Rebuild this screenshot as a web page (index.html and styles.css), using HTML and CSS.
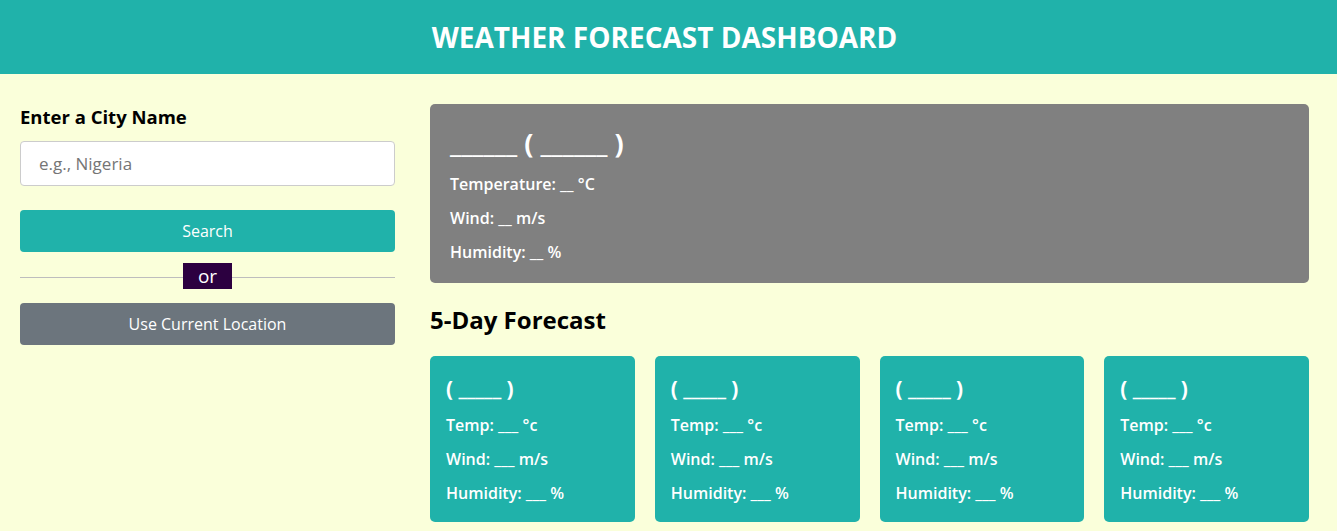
FILE: index.html
```html
<!DOCTYPE html>
<html lang="en">
<head>
<meta charset="utf-8">
<title>Weather Forecast Dashboard</title>
<link rel="stylesheet" href="styles.css">
</head>
<body>
<header class="header"><h1>WEATHER FORECAST DASHBOARD</h1></header>
<div class="container">
  <div class="weather-input">
    <h3>Enter a City Name</h3>
    <input class="city-input" type="text" placeholder="e.g., Nigeria">
    <button class="search-btn">Search</button>
    <div class="separator"><span>or</span></div>
    <button class="location-btn">Use Current Location</button>
  </div>
  <div class="weather-data">
    <div class="current-weather">
      <h2>______ ( ______ )</h2>
      <h6>Temperature: __ °C</h6>
      <h6>Wind: __ m/s</h6>
      <h6>Humidity: __ %</h6>
    </div>
    <div class="days-forecast">
      <h2>5-Day Forecast</h2>
      <ul class="weather-cards">
        <li class="card"><h3>( _____ )</h3><h6>Temp: ___ °c</h6><h6>Wind: ___ m/s</h6><h6>Humidity: ___ %</h6></li>
        <li class="card"><h3>( _____ )</h3><h6>Temp: ___ °c</h6><h6>Wind: ___ m/s</h6><h6>Humidity: ___ %</h6></li>
        <li class="card"><h3>( _____ )</h3><h6>Temp: ___ °c</h6><h6>Wind: ___ m/s</h6><h6>Humidity: ___ %</h6></li>
        <li class="card"><h3>( _____ )</h3><h6>Temp: ___ °c</h6><h6>Wind: ___ m/s</h6><h6>Humidity: ___ %</h6></li>
      </ul>
    </div>
  </div>
</div>
</body>
</html>
```
FILE: styles.css
```css
* { margin: 0; padding: 0; box-sizing: border-box; }
body {
  font-family: "Open Sans", sans-serif;
  background: #faffda;
  overflow: hidden;
}
.header {
  background: #20b2aa;
  text-align: center;
  padding: 18px 8px 18px 0;
}
.header h1 {
  color: #fff;
  font-size: 28px;
  font-weight: 700;
  line-height: 38px;
}
.container {
  display: flex;
  gap: 35px;
  padding: 30px 28px 0 20px;
}
.weather-input {
  width: 375px;
  flex-shrink: 0;
}
.weather-input h3 {
  font-size: 18.5px;
  font-weight: 700;
  line-height: 26px;
  color: #000;
}
.city-input {
  display: block;
  width: 100%;
  height: 45px;
  margin: 11px 0 24px;
  padding: 0 18px;
  font-family: "Open Sans", sans-serif;
  font-size: 17px;
  border: 1px solid #ccc;
  border-radius: 4px;
  background: #fff;
  outline: none;
}
.city-input::placeholder { color: #757575; }
.search-btn, .location-btn {
  display: block;
  width: 100%;
  height: 42px;
  border: none;
  border-radius: 4px;
  color: #fff;
  font-family: "Open Sans", sans-serif;
  font-size: 16px;
  cursor: pointer;
}
.search-btn { background: #20b2aa; }
.location-btn { background: #6c757d; }
.separator {
  height: 1px;
  margin: 25px 0;
  background: #bdbdbd;
  display: flex;
  align-items: center;
  justify-content: center;
}
.separator span {
  display: block;
  background: #2c0040;
  color: #fff;
  font-size: 19px;
  line-height: 26px;
  padding: 0 15px;
  margin-top: -3px;
}
.weather-data { flex: 1; }
.current-weather {
  background: #808080;
  color: #fff;
  padding: 20px;
  border-radius: 5px;
}
.current-weather h2 {
  font-size: 27.2px;
  font-weight: 700;
  line-height: 37px;
}
.current-weather h6, .card h6 {
  font-size: 16px;
  font-weight: 600;
  line-height: 22px;
  margin-top: 12px;
}
.days-forecast h2 {
  margin: 20px 0;
  font-size: 24px;
  font-weight: 700;
  line-height: 33px;
  color: #000;
}
.weather-cards {
  display: flex;
  gap: 20px;
  list-style: none;
}
.card {
  flex: 1;
  background: #20b2aa;
  color: #fff;
  padding: 18px 16px 18px;
  border-radius: 5px;
}
.card h3 {
  font-size: 20.8px;
  font-weight: 700;
  line-height: 28px;
}
```
